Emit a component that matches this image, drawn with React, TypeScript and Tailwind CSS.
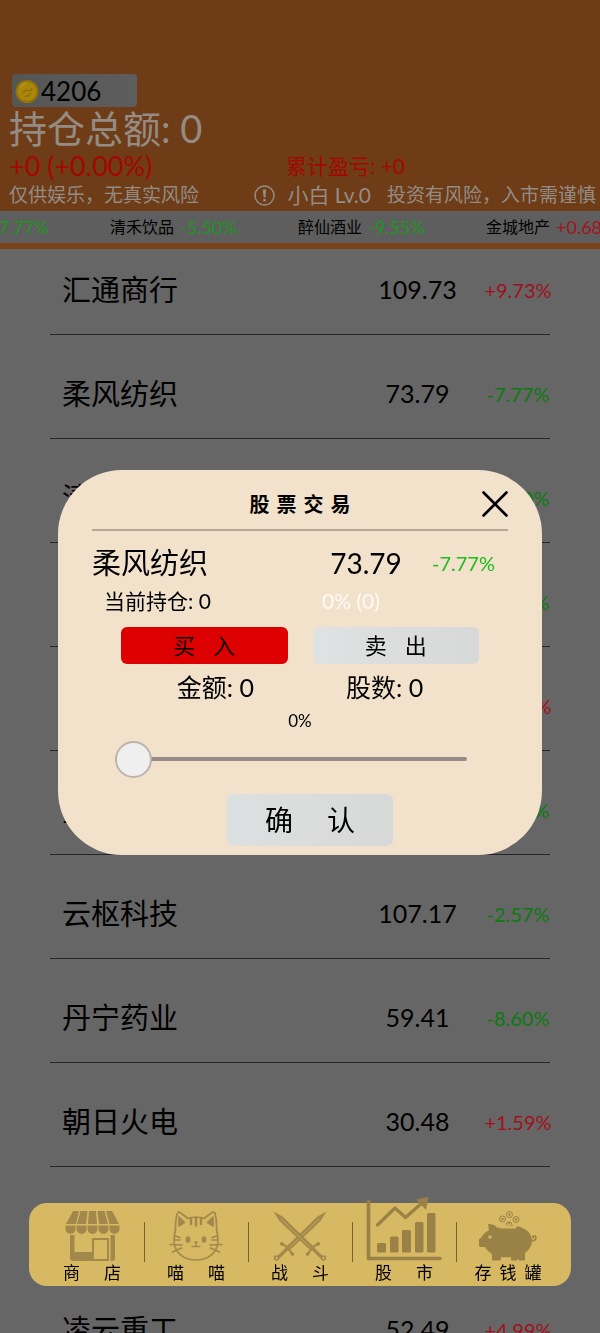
import { useState } from "react";
import clsx from "clsx";

const stocks = [
  { name: "汇通商行", price: "109.73", change: "+9.73%" },
  { name: "柔风纺织", price: "73.79", change: "-7.77%" },
  { name: "清禾饮品", price: "88.20", change: "-5.50%" },
  { name: "醉仙酒业", price: "90.45", change: "-9.55%" },
  { name: "金城地产", price: "100.68", change: "+0.68%" },
  { name: "星河传媒", price: "96.85", change: "-3.15%" },
  { name: "云枢科技", price: "107.17", change: "-2.57%" },
  { name: "丹宁药业", price: "59.41", change: "-8.60%" },
  { name: "朝日火电", price: "30.48", change: "+1.59%" },
  { name: "青木食品", price: "64.12", change: "+2.06%" },
  { name: "凌云重工", price: "52.49", change: "+4.99%" },
];

// spreads the characters of a short label
function Spaced({ text, className }: { text: string; className: string }) {
  return (
    <span className={clsx("flex justify-center", className)}>
      {text.split("").map((c, i) => (
        <span key={i}>{c}</span>
      ))}
    </span>
  );
}

function ShopIcon() {
  return (
    <svg width="55" height="50" viewBox="0 0 55 50" fill="#a2894b">
      <path d="M8 0h6l-3 13H1zM15.500 0h7l-1.500 13h-9zM24 0h7l1 13h-9zM32.500 0h7l3.500 13h-9zM41 0h6l7 13h-9.500z" />
      <path d="M.5 14.500h10v3.500a5 5 0 0 1-10 0zM11.500 14.500h10v3.500a5 5 0 0 1-10 0zM22.500 14.500h10v3.500a5 5 0 0 1-10 0zM33.500 14.500h10v3.500a5 5 0 0 1-10 0zM44.500 14.500h10v3.500a5 5 0 0 1-10 0z" />
      <path d="M5 24h4.500v17H27v9H8a3 3 0 0 1-3-3zM45.500 24H50v23a3 3 0 0 1-3 3h-1.500z" />
      <path fillRule="evenodd" d="M27 27h17v23H27zM29 29v19h13V29z" />
    </svg>
  );
}

function CatIcon() {
  return (
    <svg
      width="54"
      height="50"
      viewBox="0 0 54 50"
      fill="none"
      stroke="#a2894b"
      strokeWidth="1.700"
      strokeLinecap="round"
      strokeLinejoin="round"
    >
      <path d="M6.500 18C6.500 11 7 6 8.500 2Q9 .5 11 1.500L19 7.500Q27 5 35 7.500L43 1.500Q45 .5 46 2C47.500 7 47.700 12 47.500 18Q49 24 49 31C48 42 39 49 27 49S6 42 5 31Q5 24 6.500 18z" />
      <path d="M10 6l5.500 5.500L10 15zM44 6l-5.500 5.500L44 15z" fill="#a2894b" />
      <path d="M22 7v6M27 6.500v8M32 7v6" strokeWidth="2.400" />
      <path d="M6 25l5 1.500M6 29h5M48 25l-5 1.500M48 29h-5M1 33.500l12 .5M3.500 41l9-4M53 33.500l-12 .5M50.500 41l-9-4" />
      <ellipse cx="19" cy="28.500" rx="1.600" ry="2.500" fill="#a2894b" />
      <ellipse cx="35" cy="28.500" rx="1.600" ry="2.500" fill="#a2894b" />
      <path d="M26 31h2l-1 1.500zM27 32.500v2M27 34.500q-2 2.500-4 .5M27 34.500q2 2.500 4 .5" strokeWidth="1.400" />
    </svg>
  );
}

function Sword() {
  return (
    <g stroke="#a2894b" strokeLinecap="round" fill="none">
      <path d="M.5.5l9 5L40 35l-3.500 3.500L6 9.500z" fill="#a2894b" stroke="none" />
      <path d="M8 8l29 28" stroke="#d0b362" strokeWidth=".8" />
      <path d="M34.500 43.500l3-4.500 4-4 4.500-2.500" strokeWidth="2.200" />
      <circle cx="34.500" cy="43" r="1.300" fill="#a2894b" />
      <circle cx="45" cy="33" r="1.300" fill="#a2894b" />
      <path d="M40 38l8.500 8" strokeWidth="3.200" />
      <circle cx="50.500" cy="47" r="2" strokeWidth="1.500" fill="#d0b362" />
    </g>
  );
}

function SwordsIcon() {
  return (
    <svg width="54" height="50" viewBox="0 0 54 50">
      <g transform="matrix(-1 0 0 1 54 0)">
        <Sword />
      </g>
      <Sword />
    </svg>
  );
}

function ChartIcon() {
  return (
    <svg width="76" height="65" viewBox="0 0 76 65" className="shrink-0">
      <g fill="none" stroke="#9a8145" strokeLinecap="round" strokeLinejoin="round">
        <path d="M2.500 5.500v57h71.500" strokeWidth="3.600" />
        <path d="M11.500 29L29 12l10.500 9.500L57 6" strokeWidth="3.200" />
      </g>
      <g fill="#9a8145">
        <path d="M50 3.500L62.500 1 60 14z" />
        <rect x="11" y="47" width="9" height="9.500" rx="1.500" />
        <rect x="24" y="40.500" width="8.500" height="16" rx="1.500" />
        <rect x="36" y="34" width="9" height="22.500" rx="1.500" />
        <rect x="49" y="26" width="8.500" height="30.500" rx="1.500" />
        <rect x="61" y="17" width="8.500" height="39.500" rx="1.500" />
      </g>
    </svg>
  );
}

function PiggyIcon() {
  return (
    <svg width="58" height="50" viewBox="0 0 58 50" fill="#9a8145">
      <path d="M9 13q7 0 9.500 4Q24 14.500 32 14.500q19 1 21 14.500Q53 37 46 42v6.500q0 1-1 1h-5l-1-2-1 2h-5q-1 0-1-1V46q-5 .6-10 0v2.500q0 1-1 1h-7q-1 0-1-1V43Q8 40 6 36H1.500Q0 36 0 34v-5q0-2 2-2 2.500-5 8-8z" />
      <rect x="20.500" y="15" width="17" height="2.500" rx="1" fill="#d4b764" />
      <circle cx="11" cy="26" r="1.800" fill="#d4b764" />
      <path d="M51 29q5 2 6-2 0-2.500-2-2t-.5 2.500" fill="none" stroke="#9a8145" strokeWidth="1.500" />
      <g fill="none" stroke="#9a8145" strokeWidth="1">
        <circle cx="30.500" cy="3.500" r="3" />
        <circle cx="23.500" cy="8" r="3" />
        <circle cx="37" cy="8.500" r="3" />
        <path d="M27 14a3 3 0 1 1 6 0" />
      </g>
      <circle cx="30.500" cy="3.500" r="1.200" />
      <circle cx="23.500" cy="8" r="1.200" />
      <circle cx="37" cy="8.500" r="1.200" />
      <circle cx="30" cy="12.500" r="1" />
    </svg>
  );
}

function CoinIcon() {
  return (
    <svg width="24" height="25" viewBox="0 0 24 25">
      <circle cx="12" cy="12.500" r="11.500" fill="#957208" />
      <circle cx="12" cy="12.500" r="9.500" fill="#a9860c" />
      <path d="M8 14q2-4 5-2.500t4-2.500M9 17q4 1.500 7-3" fill="none" stroke="#8f6c06" strokeWidth="1.200" />
      <path d="M5 9q2-4 6-5" fill="none" stroke="#b8981f" strokeWidth="1.300" />
    </svg>
  );
}

const tabs = [
  { label: "商店", icon: <ShopIcon /> },
  { label: "喵喵", icon: <CatIcon /> },
  { label: "战斗", icon: <SwordsIcon /> },
  { label: "股市", icon: <ChartIcon /> },
  { label: "存钱罐", icon: <PiggyIcon /> },
];

function Header() {
  return (
    <header className="bg-[#6e3c17] pt-[74px] text-[#948c84]">
      <div className="ml-3 flex h-[33px] w-[125px] items-center gap-[2px] rounded bg-linear-to-r from-[#545655] to-[#5d5d5d] pt-[2px] pl-[3px] text-[26px] text-black">
        <CoinIcon />
        <span>4206</span>
      </div>
      <h1 className="h-[42px] pl-[9px] text-[38px] leading-[42px]">持仓总额: 0</h1>
      <div className="flex h-[34px] items-center pl-[9px] text-[#a40505]">
        <span className="w-[277px] text-[27px]">+0 (+0.00%)</span>
        <span className="text-[21px]">累计盈亏: +0</span>
      </div>
      <div className="flex h-6 items-center gap-4 pr-1 pl-[9px] text-[19px] whitespace-nowrap">
        <span>仅供娱乐，无真实风险</span>
        <span className="ml-auto flex items-center gap-3 text-[21px]">
          <svg width="21" height="21" viewBox="0 0 21 21" fill="none" stroke="#948c84">
            <circle cx="10.500" cy="10.500" r="9.500" strokeWidth="1.500" />
            <path d="M8.800 4.500h3.400l-.8 8H9.600z" fill="#948c84" stroke="none" />
            <circle cx="10.500" cy="15.200" r="1.400" fill="#948c84" stroke="none" />
          </svg>
          小白 Lv.0
        </span>
        <span>投资有风险，入市需谨慎</span>
      </div>
      <div className="mt-1 flex h-[38px] items-center overflow-hidden border-b-[6px] border-[#7b431a] bg-[#5e5e5e] text-[16px] whitespace-nowrap text-black">
        <div className="-ml-[78px] flex">
          {stocks.slice(1, 5).map((s) => (
            <span key={s.name} className="flex w-[188px] shrink-0 items-center gap-[6px]">
              {s.name}
              <span
                className={clsx(
                  "text-[18px]",
                  s.change[0] === "+" ? "text-[#a3141c]" : "text-[#1f961f]"
                )}
              >
                {s.change}
              </span>
            </span>
          ))}
        </div>
      </div>
    </header>
  );
}

function TradeDialog() {
  const [side, setSide] = useState("buy");
  const [percent, setPercent] = useState(0);
  return (
    <div className="fixed inset-0 flex items-center px-[58px] pb-2">
      <div
        role="dialog"
        aria-label="股票交易"
        className="w-full rounded-[64px] bg-[#f2e2cc] pb-[9px] text-black"
      >
        <div className="mx-[34px] grid h-[61px] grid-cols-[1fr_auto_1fr] items-center border-b-2 border-[#b3a798] pt-2">
          <span />
          <h2 className="text-[20px] font-bold">
            <Spaced text="股票交易" className="gap-[7px]" />
          </h2>
          <button aria-label="关闭" className="justify-self-end">
            <svg width="26" height="26" viewBox="0 0 26 26" stroke="#000" strokeWidth="2.600" strokeLinecap="round">
              <path d="M1.500 1.500l23 23M24.500 1.500l-23 23" />
            </svg>
          </button>
        </div>
        <div className="mx-[34px] mt-2 flex h-12 items-center">
          <span className="flex-1 text-[29px]">柔风纺织</span>
          <span className="w-[72px] text-center text-[28px]">73.79</span>
          <span className="mr-[13px] ml-[30px] text-[20px] text-[#1dbd1d]">-7.77%</span>
        </div>
        <div className="flex h-7 items-center pl-[46px] text-[21px]">
          <span className="flex-1">当前持仓: 0</span>
          <span className="w-[220px] text-[#fdfaf5]">0% (0)</span>
        </div>
        <div className="mt-3 flex gap-[25px] px-[63px] text-[22px]">
          <button
            onClick={() => setSide("buy")}
            className={clsx(
              "h-[37px] flex-1 rounded-md leading-none",
              side === "buy" ? "bg-[#dc0000]" : "bg-linear-to-r from-[#dfe2e2] to-[#d7d9d8]"
            )}
          >
            <Spaced text="买入" className="gap-[18px]" />
          </button>
          <button
            onClick={() => setSide("sell")}
            className={clsx(
              "h-[37px] flex-1 rounded-md leading-none",
              side === "sell" ? "bg-[#dc0000]" : "bg-linear-to-r from-[#dfe2e2] to-[#d7d9d8]"
            )}
          >
            <Spaced text="卖出" className="gap-[18px]" />
          </button>
        </div>
        <div className="flex h-12 items-center justify-center gap-[92px] text-[25px]">
          <span>金额: 0</span>
          <span>股数: 0</span>
        </div>
        <label htmlFor="percent" className="block h-[18px] text-center text-[17px] leading-[18px]">
          {percent}%
        </label>
        <div className="mt-[10px] mr-[75px] ml-[57px] flex h-[38px] items-center">
          <input
            id="percent"
            type="range"
            min={0}
            max={100}
            value={percent}
            onChange={(e) => setPercent(Number(e.target.value))}
            className="h-1 w-full appearance-none rounded bg-[#968b88] [&::-webkit-slider-thumb]:size-[37px] [&::-webkit-slider-thumb]:appearance-none [&::-webkit-slider-thumb]:rounded-full [&::-webkit-slider-thumb]:border-2 [&::-webkit-slider-thumb]:border-[#bdb5ad] [&::-webkit-slider-thumb]:bg-[#efefef]"
          />
        </div>
        <div className="mt-4 flex justify-center pl-5">
          <button className="h-[52px] w-[166px] rounded-md bg-linear-to-r from-[#dde0e0] to-[#d7d9d8] text-[28px] leading-none">
            <Spaced text="确认" className="gap-[34px]" />
          </button>
        </div>
      </div>
    </div>
  );
}

export default function App() {
  return (
    <div className="h-screen overflow-hidden bg-[#666] font-[Lato,'Noto_Sans_CJK_SC',sans-serif] text-black">
      <Header />
      <main className="mx-[50px] mt-px flex flex-col gap-[19px]">
        {stocks.map((s) => (
          <div key={s.name} className="flex h-[85px] shrink-0 items-center border-b border-[#262626] pb-1 pl-3">
            <span className="flex-1 text-[29px]">{s.name}</span>
            <span className="w-[105px] text-center text-[25px]">{s.price}</span>
            <span
              className={clsx(
                "ml-4 flex w-16 justify-center text-[20px]",
                s.change[0] === "+" ? "text-[#a0101c]" : "text-[#0b7a0f]"
              )}
            >
              {s.change}
            </span>
          </div>
        ))}
      </main>
      <nav className="fixed inset-x-[29px] bottom-[47px] flex h-[83px] rounded-[18px] bg-[#d7b964] px-[11px]">
        {tabs.map((t, i) => (
          <div key={t.label} className="flex flex-1">
            {i > 0 && <span className="mt-[19px] -mr-px h-10 w-px bg-[#75622f]" />}
            <button className="flex w-full flex-col items-center pt-2">
              <span className="flex h-[50px] items-end">{t.icon}</span>
              <Spaced
                text={t.label}
                className={clsx(
                  "mt-[3px] text-[17px] leading-[18px]",
                  t.label.length > 2 ? "gap-2" : "gap-6"
                )}
              />
            </button>
          </div>
        ))}
      </nav>
      <TradeDialog />
    </div>
  );
}
